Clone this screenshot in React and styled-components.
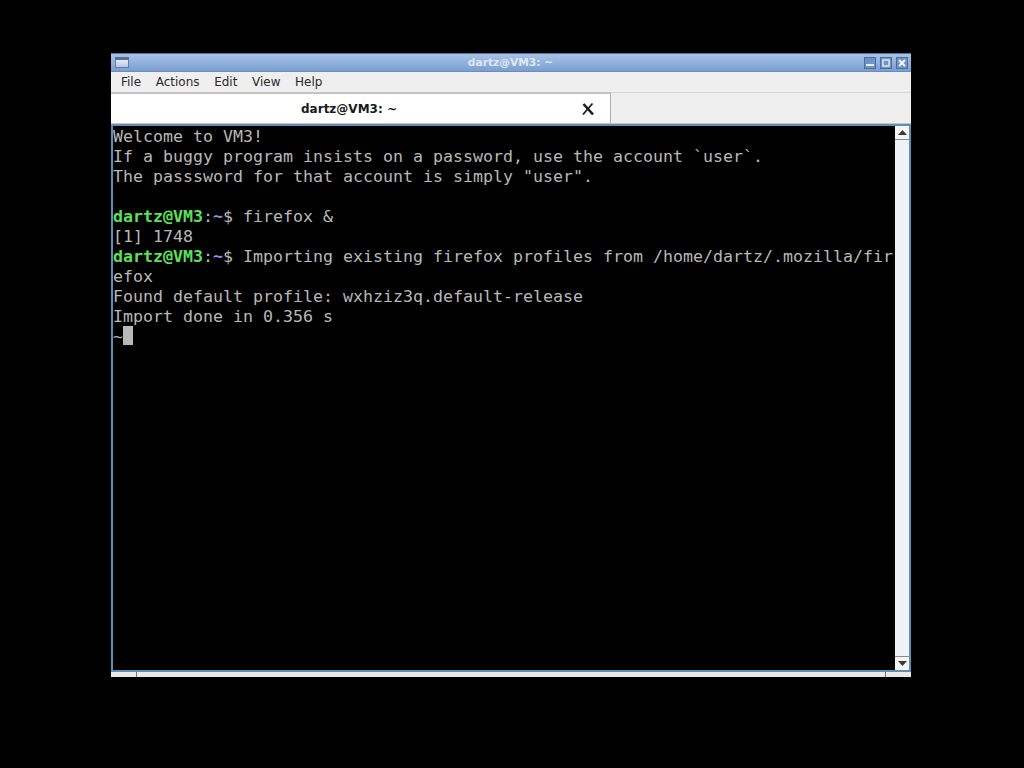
import React from "react";
import styled, { createGlobalStyle } from "styled-components";

const Global = createGlobalStyle`
  html, body { margin: 0; background: #000; }
  body { font-family: "DejaVu Sans", sans-serif; }
`;

const Desktop = styled.div`
  width: 1024px;
  height: 768px;
  background: #000;
  padding: 53px 0 0 111px;
  box-sizing: border-box;
  overflow: hidden;
`;

const Window = styled.div`
  width: 800px;
  height: 624px;
  display: flex;
  flex-direction: column;
  background: #efefef;
`;

const TitleBar = styled.div`
  height: 19px;
  flex: none;
  display: flex;
  align-items: center;
  padding: 0 3px 0 4px;
  background: linear-gradient(180deg, #a9c3e6 0%, #8fb0dc 55%, #7b9ed0 100%);
  border-top: 1px solid #4f73a3;
  border-bottom: 1px solid #6a8dbd;
  box-sizing: border-box;
`;

const WinIcon = styled.div`
  width: 14px;
  height: 11px;
  box-sizing: border-box;
  border: 1px solid #5d7ca6;
  border-top: 3px solid #566f93;
  background: linear-gradient(180deg, #e8ebf0, #b9c6da);
`;

const TitleText = styled.div`
  flex: 1;
  text-align: center;
  color: #dfe8f5;
  font-size: 10.7px;
  font-weight: 700;
  padding-left: 28px;
`;

const WinButtons = styled.div`
  display: flex;
  gap: 4px;
`;

const WinButton = styled.div`
  width: 12px;
  height: 12px;
  box-sizing: border-box;
  background: #6f93c4;
  border: 1px solid #4a6f9f;
  display: flex;
  align-items: center;
  justify-content: center;
`;

const MenuBar = styled.div`
  height: 20px;
  flex: none;
  display: flex;
  align-items: center;
  padding: 0 0 1px 10px;
  box-sizing: border-box;
  gap: 14.6px;
  background: #efefef;
  font-size: 12px;
  color: #2a2a2a;
`;

const MenuItem = styled.span``;

const TabStrip = styled.div`
  height: 32px;
  flex: none;
  display: flex;
  background: #efefef;
  border-bottom: 1px solid #c4c4c4;
  box-sizing: border-box;
`;

const ActiveTab = styled.div`
  width: 500px;
  height: 31px;
  flex: none;
  display: flex;
  align-items: center;
  background: #fff;
  border-top: 2px solid #c4c4c4;
  border-right: 1px solid #b0b0b0;
  box-sizing: border-box;
  padding: 0 15px 0 0;
`;

const TabTitle = styled.div`
  flex: 1;
  text-align: center;
  font-size: 12px;
  font-weight: 700;
  color: #1a1a1a;
  padding-left: 6px;
`;

const TabRest = styled.div`
  flex: 1;
  border-top: 1px solid #d4d4d4;
`;

const Body = styled.div`
  flex: 1;
  min-height: 0;
  display: flex;
  border: 2px solid #5e90b4;
  background: #000;
`;

const Terminal = styled.div`
  flex: 1;
  background: #000;
  padding-top: 1px;
  overflow: hidden;
  font-family: "DejaVu Sans Mono", monospace;
  font-size: 16.61px;
  line-height: 20px;
  color: #b8b8b8;
`;

const Line = styled.div`
  height: 20px;
  white-space: pre;
`;

const User = styled.span`
  color: #5ce05c;
  font-weight: 700;
`;

const Path = styled.span`
  color: #7f9cf0;
  font-weight: 700;
`;

const Colon = styled.span`
  color: #b8b8b8;
`;

const Cursor = styled.span`
  display: inline-block;
  width: 10px;
  height: 19px;
  margin-top: -1px;
  vertical-align: top;
  background: #b8b8b8;
`;

const Scrollbar = styled.div`
  width: 14px;
  flex: none;
  display: flex;
  flex-direction: column;
  background: #eef2f6;
`;

const Trough = styled.div`
  flex: 1;
  background: #eef2f6;
`;

const ScrollButton = styled.div`
  height: 14px;
  flex: none;
  box-sizing: border-box;
  background: #f5f5f5;
  display: flex;
  align-items: center;
  justify-content: center;
  border-top: ${(p) => (p.$down ? "1px solid #8a8a8a" : "none")};
  border-bottom: ${(p) => (p.$down ? "none" : "1px solid #8a8a8a")};
`;

const BottomEdge = styled.div`
  height: 5px;
  flex: none;
  background: #eaeaea;
  display: flex;
  justify-content: space-between;
  padding: 0 25px;
`;

const Grip = styled.div`
  width: 1px;
  background: #777;
`;

const Prompt = () => (
  <>
    <User>dartz@VM3</User>
    <Colon>:</Colon>
    <Path>~</Path>
    {"$ "}
  </>
);

const Arrow = ({ down }) => (
  <svg width="9" height="5" viewBox="0 0 9 5">
    <path d={down ? "M0 0H9L4.5 5Z" : "M0 5H9L4.5 0Z"} fill="#3a3a3a" />
  </svg>
);

export default function App() {
  return (
    <>
      <Global />
      <Desktop>
        <Window>
          <TitleBar>
            <WinIcon />
            <TitleText>dartz@VM3: ~</TitleText>
            <WinButtons>
              <WinButton>
                <svg width="8" height="8" viewBox="0 0 8 8">
                  <rect x="0" y="5" width="8" height="2" fill="#e6edf6" />
                </svg>
              </WinButton>
              <WinButton>
                <svg width="8" height="8" viewBox="0 0 8 8">
                  <rect x="1" y="1" width="6" height="6" fill="none" stroke="#e6edf6" strokeWidth="1.4" />
                </svg>
              </WinButton>
              <WinButton>
                <svg width="8" height="8" viewBox="0 0 8 8">
                  <path d="M1 1L7 7M7 1L1 7" stroke="#f2f5fa" strokeWidth="2" />
                </svg>
              </WinButton>
            </WinButtons>
          </TitleBar>
          <MenuBar>
            <MenuItem>File</MenuItem>
            <MenuItem>Actions</MenuItem>
            <MenuItem>Edit</MenuItem>
            <MenuItem>View</MenuItem>
            <MenuItem>Help</MenuItem>
          </MenuBar>
          <TabStrip>
            <ActiveTab>
              <TabTitle>dartz@VM3: ~</TabTitle>
              <svg width="14" height="14" viewBox="0 0 14 14">
                <path d="M2.5 2L12 12.5" stroke="#1a1a1a" strokeWidth="2.6" />
                <path d="M11.5 1.5L2 12.5" stroke="#1a1a1a" strokeWidth="1.8" />
              </svg>
            </ActiveTab>
            <TabRest />
          </TabStrip>
          <Body>
            <Terminal>
              <Line>Welcome to VM3!</Line>
              <Line>If a buggy program insists on a password, use the account `user`.</Line>
              <Line>The passsword for that account is simply "user".</Line>
              <Line> </Line>
              <Line><Prompt />firefox &amp;</Line>
              <Line>[1] 1748</Line>
              <Line><Prompt />Importing existing firefox profiles from /home/dartz/.mozilla/fir</Line>
              <Line>efox</Line>
              <Line>Found default profile: wxhziz3q.default-release</Line>
              <Line>Import done in 0.356 s</Line>
              <Line>~<Cursor /></Line>
            </Terminal>
            <Scrollbar>
              <ScrollButton><Arrow /></ScrollButton>
              <Trough />
              <ScrollButton $down><Arrow down /></ScrollButton>
            </Scrollbar>
          </Body>
          <BottomEdge>
            <Grip />
            <Grip />
          </BottomEdge>
        </Window>
      </Desktop>
    </>
  );
}
